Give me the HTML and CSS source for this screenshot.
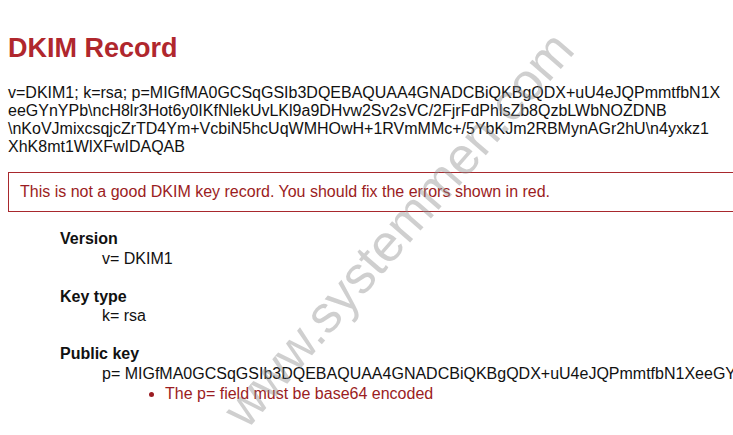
FILE: index.html
```html
<!DOCTYPE html>
<html lang="en">
<head>
<meta charset="utf-8">
<title>DKIM Record</title>
<link rel="stylesheet" href="styles.css">
</head>
<body>
<div class="page">
  <h1 class="title">DKIM Record</h1>
  <p class="record">v=DKIM1; k=rsa; p=MIGfMA0GCSqGSIb3DQEBAQUAA4GNADCBiQKBgQDX+uU4eJQPmmtfbN1X<br>eeGYnYPb\ncH8lr3Hot6y0IKfNlekUvLKl9a9DHvw2Sv2sVC/2FjrFdPhlsZb8QzbLWbNOZDNB<br>\nKoVJmixcsqjcZrTD4Ym+VcbiN5hcUqWMHOwH+1RVmMMc+/5YbKJm2RBMynAGr2hU\n4yxkz1<br>XhK8mt1WlXFwIDAQAB</p>
  <div class="alert">This is not a good DKIM key record. You should fix the errors shown in red.</div>
  <dl class="tags">
    <dt class="tag-name">Version</dt>
    <dd class="tag-value">v= DKIM1</dd>
    <dt class="tag-name">Key type</dt>
    <dd class="tag-value">k= rsa</dd>
    <dt class="tag-name">Public key</dt>
    <dd class="tag-value">
      <div class="long">p= MIGfMA0GCSqGSIb3DQEBAQUAA4GNADCBiQKBgQDX+uU4eJQPmmtfbN1XeeGYnYPb\ncH8lr3Hot6y0IKfNlekUvLKl9a9DHvw2Sv2sVC/2FjrFdPhlsZb8QzbLWbNOZDNB</div>
      <ul class="errors">
        <li class="error">The p= field must be base64 encoded</li>
      </ul>
    </dd>
  </dl>
</div>
<div class="watermark">www.systemmen.com</div>
</body>
</html>
```
FILE: styles.css
```css
html {
  overflow: hidden;
}
body {
  margin: 0;
  background: #ffffff;
  color: #111111;
  font-family: "Liberation Sans", Arial, sans-serif;
  font-size: 16px;
  position: relative;
  min-height: 435px;
}
.page {
  padding: 0 8px;
}
.title {
  margin: 33px 0 20px;
  font-size: 27px;
  font-weight: bold;
  color: #b0272d;
}
.record {
  margin: 0 0 16px;
  white-space: nowrap;
}
.alert {
  border: 1px solid #a8282d;
  border-right: none;
  margin-right: -40px;
  padding: 10px 11px;
  color: #9b1c22;
}
.tags {
  margin: 17px 0 0 52px;
  line-height: 19.5px;
}
.tag-name {
  font-weight: bold;
}
.tag-value {
  margin: 0 0 18.5px 42px;
}
.long {
  white-space: nowrap;
}
.errors {
  margin: 1px 0 0;
  padding-left: 63px;
  color: #9b1c22;
}
.error::marker {
  color: #9b1c22;
}
.watermark {
  position: absolute;
  left: 398px;
  top: 229px;
  transform: translate(-50%, -50%) rotate(-49deg);
  font-family: "Liberation Sans", Arial, sans-serif;
  font-size: 52px;
  color: rgba(140, 140, 140, 0.42);
  white-space: nowrap;
  pointer-events: none;
}
```
